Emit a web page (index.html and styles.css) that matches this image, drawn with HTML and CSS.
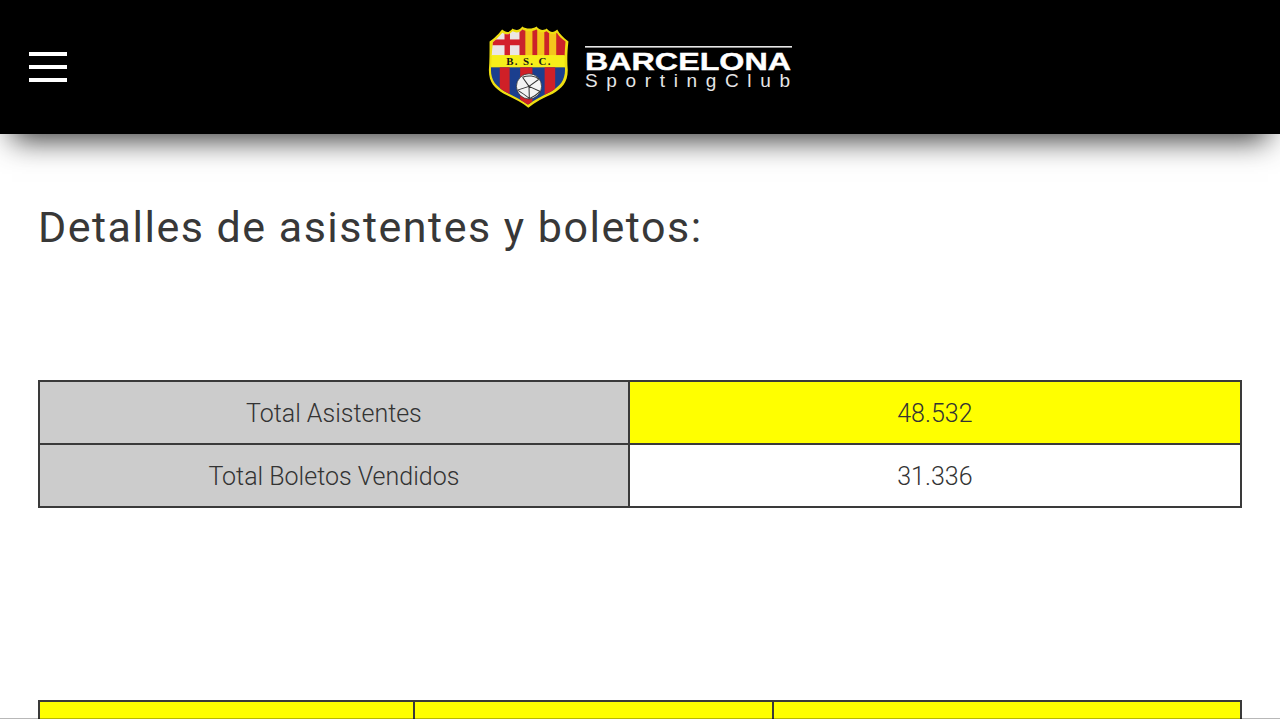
FILE: index.html
```html
<!DOCTYPE html>
<html lang="es">
<head>
<meta charset="utf-8">
<title>Barcelona Sporting Club</title>
<link rel="stylesheet" href="styles.css">
</head>
<body>
<header class="topbar">
  <button class="menu" aria-label="Menú"><span></span><span></span><span></span></button>
  <a class="logo" href="#">
    <svg class="crest" viewBox="0 0 300 285" width="100" height="95" aria-label="Escudo">
      <defs>
        <clipPath id="shield"><path d="M44 70 C58 58 64 50 72 42 C84 50 92 48 102 38 C112 44 124 42 130 32 C142 40 160 40 172 32 C180 42 192 44 202 38 C212 48 222 50 232 42 C238 52 246 60 258 68 C254 100 254 130 256 150 C256 185 240 200 214 216 C190 228 165 240 147 254 C128 240 104 228 80 216 C54 200 38 185 38 150 C40 125 40 100 44 70 Z"/></clipPath>
      </defs>
      <g transform="translate(147 142) scale(1.02) translate(-150 -144)">
      <path d="M34 68 C52 56 60 46 71 33 C84 44 92 42 102 30 C112 38 124 34 130 24 C142 32 160 32 172 24 C180 34 192 38 202 30 C212 42 222 44 233 33 C240 46 250 56 266 68 C262 100 262 130 264 152 C264 190 246 206 220 222 C194 234 168 246 148 263 C128 246 102 234 76 222 C50 206 32 190 32 152 C34 125 34 100 34 68 Z" fill="#efdf10"/>
      <g clip-path="url(#shield)">
        <rect x="30" y="20" width="100" height="90" fill="#ebe6e6"/>
        <rect x="78" y="20" width="16" height="90" fill="#d3202a"/>
        <rect x="30" y="62" width="100" height="17" fill="#d3202a"/>
        <rect x="122" y="20" width="18" height="90" fill="#c9232c"/>
        <rect x="140" y="20" width="20" height="90" fill="#f4c61c"/>
        <rect x="160" y="20" width="15" height="90" fill="#cc2229"/>
        <rect x="175" y="20" width="20" height="90" fill="#f4c61c"/>
        <rect x="195" y="20" width="15" height="90" fill="#cc2229"/>
        <rect x="210" y="20" width="20" height="90" fill="#f4c61c"/>
        <rect x="230" y="20" width="30" height="90" fill="#cc2229"/>
        <rect x="30" y="108" width="232" height="36" fill="#f6ee1a"/>
        <rect x="30" y="144" width="232" height="120" fill="#1b3f8e"/>
        <rect x="64" y="144" width="29" height="120" fill="#cf2027"/>
        <rect x="124" y="144" width="36" height="120" fill="#cf2027"/>
        <rect x="196" y="144" width="31" height="120" fill="#cf2027"/>
      </g>
      <text class="crest-text" x="150" y="138" text-anchor="middle">B. S. C.</text>
      <circle cx="150" cy="200" r="37" fill="#f4f4f4" stroke="#222" stroke-width="2"/>
      <path d="M150 200 L131 173 M150 200 L179 179 M150 200 L151 236 M150 200 L116 211 M150 200 L183 215 M131 173 C148 166 168 169 179 179 M116 211 C128 219 141 226 151 236 M183 215 C175 223 163 231 151 236" fill="none" stroke="#333" stroke-width="3"/>
      </g>
    </svg>
    <svg class="wordmark" viewBox="0 0 208 50" width="208" height="50" aria-label="Barcelona Sporting Club">
      <rect x="0" y="0" width="207" height="1.6" fill="#e8e8e8"/>
      <text class="wm-main" x="0" y="24" textLength="206" lengthAdjust="spacingAndGlyphs">BARCELONA</text>
      <text class="wm-sub" x="0" y="41" textLength="205" lengthAdjust="spacing">SportingClub</text>
    </svg>
  </a>
  <div></div>
</header>
<main class="content">
  <h1 class="title">Detalles de asistentes y boletos:</h1>
  <table class="stats stats-summary">
    <tr><td class="cell-grey">Total Asistentes</td><td class="cell-yellow">48.532</td></tr>
    <tr><td class="cell-grey">Total Boletos Vendidos</td><td>31.336</td></tr>
  </table>
  <table class="stats stats-detail">
    <tr><td class="cell-yellow col-a">&nbsp;</td><td class="cell-yellow col-b">&nbsp;</td><td class="cell-yellow">&nbsp;</td></tr>
  </table>
</main>
</body>
</html>
```
FILE: styles.css
```css
html, body {
  margin: 0;
  height: 100%;
  overflow: hidden;
  background: #fff;
}
body {
  font-family: Roboto, "Liberation Sans", sans-serif;
  color: #333;
}
body::after {
  content: "";
  position: fixed;
  left: 0;
  right: 0;
  bottom: 0;
  height: 1px;
  background: rgba(0, 0, 0, 0.28);
}
.topbar {
  display: grid;
  grid-template-columns: 1fr auto 1fr;
  align-items: center;
  height: 134px;
  background: #000;
  box-shadow: 0 18px 28px -12px rgba(0, 0, 0, 0.78);
}
.menu {
  display: flex;
  flex-direction: column;
  gap: 9.4px;
  width: 38px;
  margin: 0 0 0 29px;
  padding: 0;
  border: 0;
  background: none;
}
.menu span {
  display: block;
  height: 4px;
  background: #fff;
}
.logo {
  display: flex;
  align-items: flex-start;
  gap: 5px;
  width: 320px;
  height: 95px;
  margin-top: 1px;
  text-decoration: none;
}
.crest {
  display: block;
  flex: none;
}
.wordmark {
  display: block;
  flex: none;
  margin-top: 26px;
}
.crest-text {
  font-family: "Liberation Serif", serif;
  font-weight: 700;
  font-size: 32px;
  letter-spacing: 4px;
  fill: #151515;
}
.wm-main {
  font-family: "Liberation Sans", sans-serif;
  font-weight: 700;
  font-size: 24px;
  fill: #fff;
  stroke: #fff;
  stroke-width: 0.4px;
}
.wm-sub {
  font-family: "Liberation Sans", sans-serif;
  font-size: 19px;
  fill: #e6e6e6;
}
.content {
  padding: 0 38px;
}
.title {
  margin: 68px 0 0;
  font-size: 43px;
  line-height: 50px;
  font-weight: 400;
  letter-spacing: 1.5px;
  color: #383838;
}
.stats {
  width: 100%;
  table-layout: fixed;
  border-collapse: collapse;
  border: 2px solid #3a3a3a;
  font-size: 25px;
  font-weight: 300;
}
.stats td {
  height: 59px;
  padding: 2px 0 0;
  border: 2px solid #3a3a3a;
  text-align: center;
}
.stats-summary {
  margin-top: 128px;
}
.stats-summary td:first-child {
  width: 48.9%;
}
.stats-detail {
  margin-top: 192px;
}
.col-a {
  width: 31%;
}
.col-b {
  width: 29.7%;
}
.cell-grey {
  background: #ccc;
}
.cell-yellow {
  background: #ff0;
}
```
